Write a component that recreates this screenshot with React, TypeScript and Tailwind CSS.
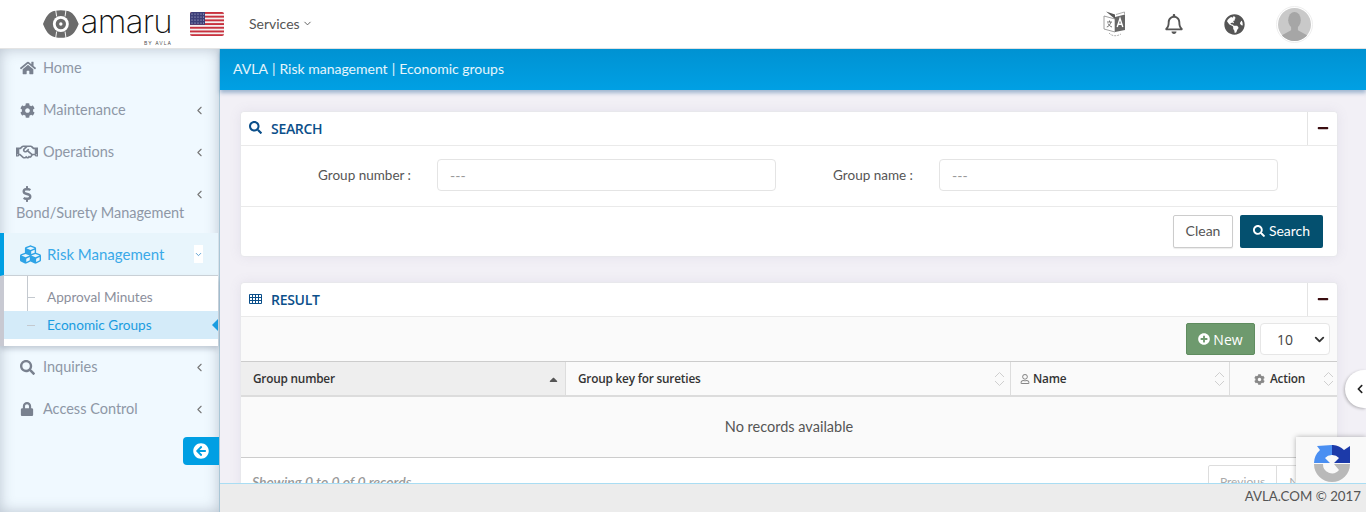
import React from "react";
import {
  FaHome,
  FaCog,
  FaRegHandshake,
  FaDollarSign,
  FaCubes,
  FaSearch,
  FaLock,
  FaArrowCircleLeft,
  FaGlobeAmericas,
  FaRegBell,
  FaPlusCircle,
  FaRegUser,
  FaMinus,
  FaChevronLeft,
  FaCaretUp,
} from "react-icons/fa";
import { FiChevronLeft, FiChevronDown } from "react-icons/fi";

const font = "font-['Lato','Open_Sans',sans-serif]";

const Logo = () => (
  <div className="flex items-center ml-[43px] w-[129px] relative">
    <svg width="38" height="30" viewBox="0 0 38 30" className="mt-[-1px]">
      <path
        d="M0 15 C3 8 6 2 13 1 C17 0 21 0 25 1 C32 2 35 8 38 15 C35 22 32 28 25 29 C21 30 17 30 13 29 C6 28 3 22 0 15 Z"
        fill="#6b6b6b"
      />
      <circle cx="19" cy="15" r="8.5" fill="#fff" />
      <circle cx="19" cy="15" r="5.5" fill="#6b6b6b" />
      <circle cx="19" cy="15" r="1.8" fill="#fff" />
      <path d="M13.5 0 L14.5 7 M24.5 0 L23.5 7 M13.5 30 L14.5 23 M24.5 30 L23.5 23" stroke="#fff" strokeWidth="1" />
    </svg>
    <span className="font-['Inter',sans-serif] font-extralight text-[33px] leading-none text-[#111] ml-[2px] mt-[-5px] tracking-[-0.7px]">
      amaru
    </span>
    <span className="absolute right-0 top-[31px] text-[5px] leading-none tracking-[1px] text-[#555] font-['Inter',sans-serif]">
      BY AVLA
    </span>
  </div>
);

const Flag = () => (
  <svg width="34" height="24" viewBox="0 0 34 24" className="rounded-[2px]">
    <rect width="34" height="24" fill="#f4f0f0" />
    {[0, 1, 2, 3, 4, 5, 6].map((i) => (
      <rect key={i} y={i * 3.7} width="34" height="1.9" fill="#c8313e" />
    ))}
    <rect width="15" height="12.8" fill="#3d3f78" />
    {[2, 5, 8, 11].map((y) =>
      [2, 5, 8, 11, 13.5].map((x) => <circle key={`${x}-${y}`} cx={x} cy={y} r="0.6" fill="#c9c9e0" />)
    )}
  </svg>
);

const TranslateIcon = () => (
  <svg width="24" height="26" viewBox="0 0 24 26">
    <path d="M1 5 L12 8 V21 L1 18 Z" fill="#fff" stroke="#888" strokeWidth="0.8" />
    <path d="M3 0.5 L12 3.5 V8 Z" fill="#555" />
    <path d="M12 6 L22 3.5 V19 L12 21 Z" fill="#666" />
    <path d="M13 3.5 L21.5 1 V3.5" fill="none" stroke="#999" strokeWidth="0.8" />
    <path d="M4 11 H9 M6.5 9.5 V11 M8 11 C7 14 5.5 15.5 3.8 16 M5 12.5 C6 14.5 7.5 15.5 9 16" stroke="#666" strokeWidth="0.9" fill="none" />
    <path d="M14.2 16 L17 7.5 L19.8 16 M15.2 13.2 H18.8" stroke="#fff" strokeWidth="1.4" fill="none" />
    <path d="M6 22 C9 25.5 14 25.5 18 23" stroke="#999" strokeWidth="0.8" fill="none" strokeDasharray="2 1" />
  </svg>
);

const Avatar = () => (
  <div className="w-[37px] h-[37px] rounded-full border border-[#eee] p-px">
    <svg viewBox="0 0 34 34" className="w-full h-full rounded-full">
      <rect width="34" height="34" fill="#c9c9c9" />
      <ellipse cx="17" cy="12.5" rx="6.5" ry="8.5" fill="#a6a6a6" />
      <path d="M13.5 19 V23 L4 28 V34 H30 V28 L20.5 23 V19 Z" fill="#a6a6a6" />
    </svg>
  </div>
);

const TableIcon = () => (
  <svg width="13" height="10" viewBox="0 0 13 10" fill="none" stroke="#0b4f8a" strokeWidth="1">
    <path d="M.5.5H12.5V9.5H.5Z M.5 3.5H12.5 M.5 6.5H12.5 M3.5.5V9.5 M6.5.5V9.5 M9.5.5V9.5" />
  </svg>
);

const Header = () => (
  <header className="h-[49px] shrink-0 bg-white border-b border-[#e4e4e4] flex items-center">
    <Logo />
    <div className="ml-[18px]">
      <Flag />
    </div>
    <div className="ml-[25px] pb-[2px] flex items-center gap-[2px] text-[14px] text-[#555]">
      Services
      <FiChevronDown className="text-[11px] mt-px" />
    </div>
    <div className="ml-auto flex items-center mr-[53px]">
      <TranslateIcon />
      <FaRegBell className="ml-[37px] text-[20px] text-[#555]" />
      <FaGlobeAmericas className="ml-[40px] text-[21px] text-[#555]" />
      <div className="ml-[31px]">
        <Avatar />
      </div>
    </div>
  </header>
);

const NavItem = ({
  icon,
  label,
  chevron = true,
}: {
  icon: React.ReactNode;
  label: string;
  chevron?: boolean;
}) => (
  <div className="h-[42px] pb-[4px] flex items-center pl-[20px] pr-[13px] text-[14.5px] text-[#8e97a6]">
    <span className="w-[23px] flex justify-start text-[#79818f]">{icon}</span>
    <span>{label}</span>
    {chevron && <FiChevronLeft className="ml-auto text-[13px] text-[#777]" />}
  </div>
);

const Sidebar = () => (
  <aside className="w-[220px] shrink-0 bg-[#f0f9ff] border-r border-[#a9c6d6] shadow-[inset_0_0_14px_rgba(90,100,120,0.35)] flex flex-col">
    <NavItem icon={<FaHome className="text-[16px]" />} label="Home" chevron={false} />
    <NavItem icon={<FaCog className="text-[15px]" />} label="Maintenance" />
    <div className="h-[41px] pb-[3px] flex items-center pl-[16px] pr-[13px] text-[14.5px] text-[#8e97a6]">
      <span className="w-[27px] text-[#79818f]">
        <FaRegHandshake className="text-[22px]" />
      </span>
      <span>Operations</span>
      <FiChevronLeft className="ml-auto text-[13px] text-[#777]" />
    </div>
    <div className="h-[59px] pl-[16px] pr-[13px] pt-[7px] text-[14.5px] text-[#8e97a6]">
      <div className="flex items-center h-[26px]">
        <FaDollarSign className="text-[16px] text-[#79818f] ml-[3px]" />
        <FiChevronLeft className="ml-auto text-[13px] text-[#777]" />
      </div>
      <div className="leading-[20px] -mt-[4px]">Bond/Surety Management</div>
    </div>
    <div className="h-[43px] bg-[#e8f5fc] border-l-4 border-[#009fe3] border-b border-b-[#ccd3d9] mr-[1px] flex items-center pl-[16px] pr-[15px] text-[15px] text-[#3aa9e8]">
      <FaCubes className="text-[21px] mr-[6px] text-[#2ea3e6]" />
      <span>Risk Management</span>
      <span className="ml-auto w-[9px] h-[18px] bg-white flex items-center justify-center">
        <FiChevronDown className="text-[13px] text-[#2e87c7]" />
      </span>
    </div>
    <div className="h-[70px] border-l-4 border-l-[#c8c9d2] mr-[1px] bg-white shadow-[0_3px_5px_rgba(90,100,120,0.3)] pt-[7px] relative text-[13.6px]">
      <div className="absolute left-[23px] top-0 h-[50px] w-px bg-[#c4c9cf]" />
      <div className="h-[28px] flex items-center pl-[43px] text-[#8c8f9c] relative">
        <span className="absolute left-[23px] w-[8px] h-px bg-[#c4c9cf]" />
        Approval Minutes
      </div>
      <div className="h-[28px] flex items-center pl-[43px] bg-[#d4ebf9] text-[#1a9ce0] relative">
        <span className="absolute left-[23px] w-[8px] h-px bg-[#c4c9cf]" />
        Economic Groups
        <span className="absolute right-0 w-0 h-0 border-y-[6px] border-y-transparent border-r-[6px] border-r-[#1a9ce0]" />
      </div>
    </div>
    <div className="mt-[2px]">
      <NavItem icon={<FaSearch className="text-[15px]" />} label="Inquiries" />
      <NavItem icon={<FaLock className="text-[14px]" />} label="Access Control" />
    </div>
    <div className="mt-[5px] self-end w-[36px] h-[28px] bg-[#009fe3] rounded-l-[4px] flex items-center justify-center">
      <FaArrowCircleLeft className="text-white text-[16px]" />
    </div>
  </aside>
);

const CardHeader = ({ icon, title }: { icon: React.ReactNode; title: string }) => (
  <div className="h-[34px] flex items-center border-b border-[#eaeaea] bg-white rounded-t-[4px]">
    <span className="ml-[8px] w-[13px] text-[#0b4f8a] pb-[2px]">{icon}</span>
    <span className="ml-[9px] text-[14px] font-['Open_Sans',sans-serif] font-semibold text-[#0b4f8a] tracking-[-0.3px]">{title}</span>
    <div className="ml-auto w-[30px] h-full pb-[2px] border-l border-[#e4e4e4] flex items-center justify-center">
      <FaMinus className="text-[12px] text-[#3a0d10]" />
    </div>
  </div>
);

const Field = ({ label, labelWidth, width }: { label: string; labelWidth: string; width: string }) => (
  <div className="flex items-center">
    <label className={`${labelWidth} text-right text-[13.5px] text-[#555] pr-[26px]`}>{label}</label>
    <div className={`${width} h-[32px] border border-[#e4e4e4] rounded-[4px] px-[12px] flex items-center text-[14px] text-[#999] bg-white`}>
      ---
    </div>
  </div>
);

const SearchCard = () => (
  <section className="h-[146px] shrink-0 bg-white rounded-[4px] border border-[#e8e8ec] shadow-[0_0_12px_rgba(120,110,150,0.1)]">
    <CardHeader icon={<FaSearch className="text-[13px]" />} title="SEARCH" />
    <div className="h-[61px] pb-[2px] flex items-center border-b border-[#eaeaea]">
      <Field label="Group number :" labelWidth="w-[196px]" width="w-[339px]" />
      <Field label="Group name :" labelWidth="w-[163px]" width="w-[339px]" />
    </div>
    <div className="h-[50px] pb-[2px] flex items-center justify-end gap-[7px] pr-[14px]">
      <button className="h-[33px] w-[60px] pb-[1px] border border-[#ccc] rounded-[2px] text-[14px] text-[#555] bg-white shadow-[0_1px_1px_rgba(0,0,0,0.08)]">
        Clean
      </button>
      <button className="h-[33px] w-[83px] pb-[1px] bg-[#04506f] rounded-[2px] text-[14px] text-white flex items-center justify-center gap-[4px]">
        <FaSearch className="text-[12px]" />
        Search
      </button>
    </div>
  </section>
);

const SortArrows = () => (
  <svg width="11" height="16" viewBox="0 0 11 16" className="ml-auto shrink-0" fill="none" stroke="#cfcfcf" strokeWidth="1">
    <path d="M1 6 L5.5 1.5 L10 6 M1 10 L5.5 14.5 L10 10" />
  </svg>
);

const th = "h-full pt-px flex items-center font-['Open_Sans',sans-serif] font-semibold text-[11.8px] text-[#333] tracking-[-0.2px]";

const ResultCard = () => (
  <section className="bg-[#fafafa] rounded-t-[4px] border border-[#e8e8ec] shadow-[0_0_12px_rgba(120,110,150,0.1)]">
    <CardHeader icon={<TableIcon />} title="RESULT" />
    <div className="h-[44px] flex items-center justify-end pr-[7px]">
      <button className="h-[32px] w-[69px] bg-[#6e9a6e] border border-[#5f8c5f] rounded-[2px] text-[14px] text-white flex items-center justify-center gap-[3px] font-['Open_Sans',sans-serif]">
        <FaPlusCircle className="text-[12px]" />
        New
      </button>
      <div className="ml-[5px] w-[70px] h-[32px] bg-white border border-[#e6e6e6] rounded-[4px] flex items-center pl-[16px] pr-[2px] text-[14px] text-[#444] font-['Open_Sans',sans-serif]">
        10
        <FiChevronDown className="ml-auto text-[15px] text-[#333] stroke-[3]" />
      </div>
    </div>
    <div className="h-[36px] flex border-t border-[#ccc] border-b-2 border-b-[#dcdcdc]">
      <div className={`${th} w-[325px] bg-[#eeeeee] pl-[12px] pr-[5px] border-r border-[#ddd]`}>
        Group number
        <FaCaretUp className="ml-auto text-[13px] text-[#555]" />
      </div>
      <div className={`${th} w-[445px] pl-[12px] pr-[5px] border-r border-[#ddd]`}>
        Group key for sureties
        <SortArrows />
      </div>
      <div className={`${th} w-[219px] pl-[9px] pr-[4px] border-r border-[#ddd]`}>
        <FaRegUser className="text-[10px] text-[#888] mr-[3px]" />
        Name
        <SortArrows />
      </div>
      <div className={`${th} flex-1 pl-[24px] pr-[3px]`}>
        <FaCog className="text-[11px] text-[#888] mr-[5px]" />
        Action
        <SortArrows />
      </div>
    </div>
    <div className="h-[61px] pb-[1px] flex items-center justify-center border-b border-[#ccc] text-[14.5px] text-[#555]">
      No records available
    </div>
    <div className="h-[50px] flex items-start pt-[7px] pl-[11px] pr-[9px] bg-white">
      <span className="mt-[6px] text-[14px] italic text-[#999] font-semibold">Showing 0 to 0 of 0 records</span>
      <div className="ml-auto flex h-[34px] border border-[#ddd] rounded-[2px] text-[12px] text-[#aaa]">
        <span className="w-[68px] flex items-center justify-center border-r border-[#ddd]">Previous</span>
        <span className="w-[50px] flex items-center justify-center">Next</span>
      </div>
    </div>
  </section>
);

const Recaptcha = () => (
  <div className="absolute right-0 bottom-[29px] w-[70px] h-[46px] bg-[#f9f9f9] shadow-[0_0_5px_rgba(0,0,0,0.3)] overflow-hidden">
    <svg width="38" height="38" viewBox="0 0 38 38" className="ml-[17px] mt-[7px]">
      <path d="M19 1 V11 A9 9 0 0 0 12 14 L17 19 H1 A18 18 0 0 1 7 6 L4 2 Z" fill="#4a8ff2" />
      <path d="M19 1 H20 A18 18 0 0 1 31 6 L37 2 V19 H21 L26 14 A9 9 0 0 0 19 11 Z" fill="#1c3aa9" />
      <path d="M1 20 H10 A9 9 0 0 0 26 26 L21 20 H37 A18 18 0 0 1 1 20 Z" fill="#b9b9b9" />
    </svg>
  </div>
);

const App = () => (
  <div className={`${font} w-[1366px] h-[512px] flex flex-col overflow-hidden bg-white relative`}>
    <Header />
    <div className="flex-1 flex min-h-0">
      <Sidebar />
      <main className="flex-1 flex flex-col min-w-0 relative">
        <div className="h-[41px] pb-[2px] shrink-0 bg-[linear-gradient(#0092d2,#00a0e4)] shadow-[0_3px_4px_rgba(60,110,160,0.45)] flex items-center gap-[4px] pl-[13px] text-[14px] text-white/90 z-10">
          <span>AVLA</span>
          <span>|</span>
          <span>Risk management</span>
          <span>|</span>
          <span>Economic groups</span>
        </div>
        <div className="flex-1 min-h-0 overflow-hidden bg-[#f2f0f6] pl-[20px] pr-[28px] pt-[21px] flex flex-col gap-[25px]">
          <SearchCard />
          <ResultCard />
        </div>
        <footer className="h-[29px] pb-[2px] shrink-0 bg-[#ececec] border-t border-[#a9ddf3] flex items-center justify-end pr-[5px] text-[13.3px] text-[#555] z-10">
          AVLA.COM © 2017
        </footer>
        <Recaptcha />
        <div className="absolute right-0 top-[321px] w-[21px] h-[38px] bg-white rounded-l-full shadow-[-1px_1px_3px_rgba(0,0,0,0.25)] flex items-center justify-end">
          <FaChevronLeft className="text-[10px] text-[#222] mr-[1px]" />
        </div>
      </main>
    </div>
  </div>
);

export default App;
